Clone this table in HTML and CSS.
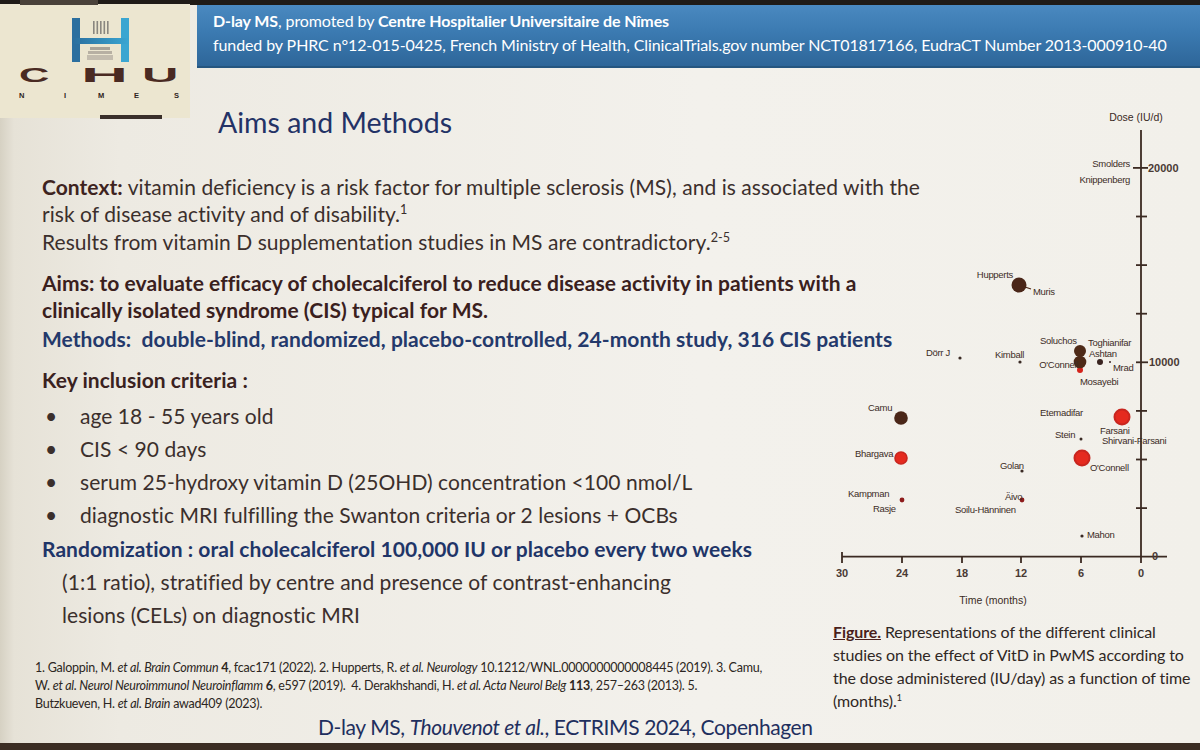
FILE: index.html
```html
<!DOCTYPE html>
<html lang="en">
<head>
<meta charset="utf-8">
<title>Aims and Methods</title>
<link rel="stylesheet" href="styles.css">
</head>
<body>
<div class="slide">
  <header class="header">
    <div class="logo">
      <svg class="logo-card" viewBox="0 0 192 124" width="192" height="124">
        <defs>
          <linearGradient id="hgrad" x1="0" y1="0" x2="1" y2="0">
            <stop offset="0" stop-color="#2a6e9e"/>
            <stop offset="1" stop-color="#3aa6d2"/>
          </linearGradient>
        </defs>
        <rect x="0" y="4" width="190" height="114" fill="#ece6d0"/>
        <rect x="20" y="0" width="78" height="5" fill="#4a423a"/>
        <rect x="100" y="115" width="62" height="4" fill="#3a302a"/>
        <!-- pillars -->
        <g fill="#8a8780">
          <rect x="93" y="21" width="1.6" height="13"/>
          <rect x="96.5" y="21" width="1.6" height="13"/>
          <rect x="100" y="21" width="1.6" height="13"/>
          <rect x="103.5" y="21" width="1.6" height="13"/>
          <rect x="107" y="21" width="1.6" height="13"/>
        </g>
        <!-- base steps -->
        <rect x="90" y="47" width="20" height="3" fill="#a9a398"/>
        <rect x="88" y="51" width="24" height="3" fill="#b7b0a3"/>
        <rect x="87" y="55" width="26" height="5" fill="#c3bcae"/>
        <!-- H -->
        <rect x="72" y="18" width="8" height="44" fill="#2b6f9f"/>
        <rect x="121" y="18" width="8" height="44" fill="#3ba6d1"/>
        <rect x="72" y="38" width="57" height="6" fill="url(#hgrad)"/>
        <!-- CHU -->
        <text class="logo-big" transform="translate(19 82) scale(2 1)">C</text>
        <text class="logo-big" transform="translate(81 82) scale(3.1 1)">H</text>
        <text class="logo-big" transform="translate(142 82) scale(2.4 1)">U</text>
        <text class="logo-small" x="19" y="98">N</text>
        <text class="logo-small" x="64" y="98">I</text>
        <text class="logo-small" x="98" y="98">M</text>
        <text class="logo-small" x="134" y="98">E</text>
        <text class="logo-small" x="174" y="98">S</text>
      </svg>
    </div>
    <div class="banner">
      <p><b>D-lay MS</b>, promoted by <b>Centre Hospitalier Universitaire de Nîmes</b></p>
      <p>funded by PHRC n°12-015-0425, French Ministry of Health, ClinicalTrials.gov number NCT01817166, EudraCT Number 2013-000910-40</p>
    </div>
  </header>

  <main class="content">
    <section class="left">
      <h1 class="title">Aims and Methods</h1>
      <div class="text">
        <p class="context"><b class="brown">Context:</b> vitamin deficiency is a risk factor for multiple sclerosis (MS), and is associated with the<br>risk of disease activity and of disability.<sup>1</sup></p>
        <p class="results">Results from vitamin D supplementation studies in MS are contradictory.<sup>2-5</sup></p>
        <p class="aims">Aims: to evaluate efficacy of cholecalciferol to reduce disease activity in patients with a<br>clinically isolated syndrome (CIS) typical for MS.</p>
        <p class="methods">Methods:&nbsp; double-blind, randomized, placebo-controlled, 24-month study, 316 CIS patients</p>
        <p class="key">Key inclusion criteria :</p>
        <ul class="bullets">
          <li><span class="dot">•</span>age 18 - 55 years old</li>
          <li><span class="dot">•</span>CIS &lt; 90 days</li>
          <li><span class="dot">•</span>serum 25-hydroxy vitamin D (25OHD) concentration &lt;100 nmol/L</li>
          <li><span class="dot">•</span>diagnostic MRI fulfilling the Swanton criteria or 2 lesions + OCBs</li>
        </ul>
        <p class="random"><b class="navy">Randomization : oral cholecalciferol 100,000 IU or placebo every two weeks</b><br>(1:1 ratio), stratified by centre and presence of contrast-enhancing<br>lesions (CELs) on diagnostic MRI</p>
      </div>
      <div class="refs">
        <p>1. Galoppin, M. <i>et al. Brain Commun</i> <b>4</b>, fcac171 (2022). 2. Hupperts, R. <i>et al. Neurology</i> 10.1212/WNL.0000000000008445 (2019). 3. Camu,</p>
        <p>W. <i>et al. Neurol Neuroimmunol Neuroinflamm</i> <b>6</b>, e597 (2019).&nbsp; 4. Derakhshandi, H. <i>et al. Acta Neurol Belg</i> <b>113</b>, 257–263 (2013). 5.</p>
        <p>Butzkueven, H. <i>et al. Brain</i> awad409 (2023).</p>
      </div>
      <p class="footer">D-lay MS, <i>Thouvenot et al.</i>, ECTRIMS 2024, Copenhagen</p>
    </section>

    <aside class="right">
      <svg class="chart" viewBox="0 0 380 510" width="380" height="510">
        <!-- axes -->
        <g class="axis">
          <line x1="321" y1="30" x2="321" y2="457"/>
          <line x1="22" y1="456.7" x2="347" y2="456.7"/>
          <line x1="316" y1="408.1" x2="327" y2="408.1"/>
          <line x1="316" y1="359.5" x2="327" y2="359.5"/>
          <line x1="316" y1="310.9" x2="327" y2="310.9"/>
          <line x1="316" y1="262.3" x2="328" y2="262.3"/>
          <line x1="316" y1="213.7" x2="327" y2="213.7"/>
          <line x1="316" y1="165.1" x2="327" y2="165.1"/>
          <line x1="316" y1="116.5" x2="327" y2="116.5"/>
          <line x1="313" y1="67.9" x2="328" y2="67.9"/>
          <line x1="22" y1="452" x2="22" y2="463"/>
          <line x1="82" y1="456.7" x2="82" y2="463"/>
          <line x1="142" y1="456.7" x2="142" y2="463"/>
          <line x1="201" y1="456.7" x2="201" y2="463"/>
          <line x1="261" y1="456.7" x2="261" y2="463"/>
          <line x1="321" y1="456.7" x2="321" y2="463"/>
        </g>
        <text class="ax" x="316" y="21" text-anchor="middle">Dose (IU/d)</text>
        <text class="ax" x="173" y="504" text-anchor="middle">Time (months)</text>
        <g class="tick">
          <text x="22" y="477" text-anchor="middle">30</text>
          <text x="82" y="477" text-anchor="middle">24</text>
          <text x="142" y="477" text-anchor="middle">18</text>
          <text x="201" y="477" text-anchor="middle">12</text>
          <text x="261" y="477" text-anchor="middle">6</text>
          <text x="321" y="477" text-anchor="middle">0</text>
          <text x="328" y="72">20000</text>
          <text x="329" y="266">10000</text>
          <text x="332" y="460">0</text>
        </g>
        <!-- dots -->
        <g>
          <circle cx="199" cy="185" r="7.5" fill="#4a2618"/>
          <line x1="205" y1="187" x2="211" y2="189" stroke="#4a2618" stroke-width="1.2"/>
          <circle cx="140" cy="258" r="1.6" fill="#3a2a24"/>
          <circle cx="200" cy="262" r="1.6" fill="#3a2a24"/>
          <circle cx="260" cy="270" r="3" fill="#d4231b"/>
          <circle cx="260" cy="251" r="6" fill="#4e2a17"/>
          <circle cx="260" cy="262" r="6.3" fill="#4e2a17"/>
          <circle cx="280" cy="262" r="3" fill="#3a2420"/>
          <circle cx="290" cy="262" r="1" fill="#3a2420"/>
          <circle cx="302" cy="317" r="7.5" fill="#e52a1f" stroke="#c8261f" stroke-width="2"/>
          <circle cx="261" cy="339" r="1.5" fill="#3a2a24"/>
          <circle cx="81" cy="318" r="6.8" fill="#4a2618"/>
          <circle cx="81" cy="358" r="6" fill="#e52a1f" stroke="#c8261f" stroke-width="1.6"/>
          <circle cx="262" cy="358" r="7.5" fill="#e52a1f" stroke="#c8261f" stroke-width="2"/>
          <circle cx="202" cy="371" r="1.6" fill="#3a2a24"/>
          <circle cx="82" cy="400" r="2.4" fill="#8e1c1c"/>
          <circle cx="202" cy="400" r="2.4" fill="#8e1c1c"/>
          <circle cx="262" cy="436" r="1.6" fill="#3a2a24"/>
        </g>
        <!-- labels -->
        <g class="lbl">
          <text x="310" y="67" text-anchor="end">Smolders</text>
          <text x="310" y="83" text-anchor="end">Knippenberg</text>
          <text x="193" y="178" text-anchor="end">Hupperts</text>
          <text x="213" y="195">Muris</text>
          <text x="130" y="256" text-anchor="end">Dörr J</text>
          <text x="175" y="258">Kimball</text>
          <text x="220" y="244">Soluchos</text>
          <text x="268" y="246">Toghianifar</text>
          <text x="269" y="257">Ashtan</text>
          <text x="258" y="268" text-anchor="end">O'Connell</text>
          <text x="293" y="271">Mrad</text>
          <text x="260" y="285">Mosayebi</text>
          <text x="220" y="316">Etemadifar</text>
          <text x="280" y="334">Farsani</text>
          <text x="282" y="344">Shirvani-Farsani</text>
          <text x="235" y="338">Stein</text>
          <text x="48" y="311">Camu</text>
          <text x="35" y="357">Bhargava</text>
          <text x="270" y="371">O'Connell</text>
          <text x="180" y="369">Golan</text>
          <text x="28" y="397">Kampman</text>
          <text x="53" y="412">Rasje</text>
          <text x="185" y="400">Äivo</text>
          <text x="135" y="413">Soilu-Hänninen</text>
          <text x="267" y="438">Mahon</text>
        </g>
      </svg>
      <p class="caption"><b class="fig">Figure.</b> Representations of the different clinical<br>studies on the effect of VitD in PwMS according to<br>the dose administered (IU/day) as a function of time<br>(months).<sup>1</sup></p>
    </aside>
  </main>
</div>
</body>
</html>
```

FILE: styles.css
```css
* {
  box-sizing: border-box;
  margin: 0;
  padding: 0;
}

html,
body {
  width: 1200px;
  height: 750px;
  overflow: hidden;
}

body {
  background: #efede6;
  font-family: Lato, "Liberation Sans", sans-serif;
  color: #3b2f2c;
}

.slide {
  width: 1200px;
  height: 750px;
  display: flex;
  flex-direction: column;
  background: linear-gradient(90deg, #d6d1c3 0, #e6e2d7 14px, #edeae2 120px, #f3f1ec 700px, #f2f0ea 1200px);
  border-bottom: 7px solid #3b2d23;
}

/* header */
.header {
  display: flex;
  height: 68px;
  flex-shrink: 0;
  background: linear-gradient(#1f1b17 0, #1f1b17 5px, transparent 5px);
}

.logo {
  width: 197px;
  height: 68px;
  flex-shrink: 0;
}

.logo-card {
  display: block;
}

.logo-big {
  font-family: "Liberation Sans", sans-serif;
  font-weight: 700;
  font-size: 21px;
  fill: #4a2a22;
}

.logo-small {
  font-family: "Liberation Sans", sans-serif;
  font-weight: 700;
  font-size: 7.5px;
  fill: #2e2420;
}

.banner {
  flex: 1;
  margin-top: 5px;
  height: 63px;
  padding: 4px 0 0 16px;
  background: linear-gradient(180deg, #4a89c0 0%, #3b7ab1 45%, #2e6699 100%);
  border-bottom: 2px solid #255680;
  color: #ffffff;
  font-size: 16px;
  line-height: 24px;
  letter-spacing: -0.1px;
  white-space: nowrap;
}

/* content */
.content {
  display: grid;
  grid-template-columns: 820px 380px;
  flex: 1;
}

.left {
  padding-left: 42px;
}

.title {
  margin: 38px 0 0 176px;
  font-size: 28.5px;
  line-height: 33px;
  font-weight: 400;
  color: #233266;
}

.text {
  margin-top: 34px;
}

.text p,
.bullets li {
  font-size: 21px;
  line-height: 27px;
  white-space: nowrap;
  letter-spacing: 0.05px;
  color: #3b2f2c;
}

sup {
  font-size: 0.6em;
  line-height: 0;
  vertical-align: 0.6em;
}

.brown {
  color: #3e2320;
}

.navy {
  color: #1f3568;
}

.text .results {
  margin-top: 1px;
}

.text .aims {
  margin-top: 14px;
  font-weight: 700;
  color: #3a201d;
}

.text .methods {
  margin-top: 2px;
  font-weight: 700;
  color: #24396b;
}

.text .key {
  margin-top: 14px;
  font-weight: 700;
  color: #3a221f;
}

.bullets {
  list-style: none;
  margin-top: 6px;
}

.bullets li {
  display: flex;
  line-height: 33px;
}

.dot {
  width: 38px;
  padding-left: 3px;
  flex-shrink: 0;
}

.text .random {
  margin-top: 1px;
  line-height: 33px;
  padding-left: 20px;
  text-indent: -20px;
}

.refs {
  margin: 28px 0 0 -7px;
}

.refs p {
  font-size: 12.5px;
  line-height: 18px;
  white-space: nowrap;
  letter-spacing: -0.25px;
  color: #2c2622;
}

.footer {
  margin-top: 1px;
  padding-left: 276px;
  font-size: 21px;
  line-height: 26px;
  color: #1f2f5e;
  white-space: nowrap;
  letter-spacing: -0.4px;
}

/* right column */
.chart {
  display: block;
  margin-top: 32px;
}

.axis line {
  stroke: #3b2a22;
  stroke-width: 1.8;
}

.ax {
  font-family: "Liberation Sans", sans-serif;
  font-size: 10.5px;
  fill: #3a2a24;
}

.tick text {
  font-family: "Liberation Sans", sans-serif;
  font-size: 11px;
  font-weight: 700;
  fill: #4a3a34;
}

.lbl text {
  font-family: "Liberation Sans", sans-serif;
  font-size: 9.5px;
  letter-spacing: -0.3px;
  fill: #3d2c26;
}

.caption {
  margin-top: 10px;
  padding-left: 13px;
  font-size: 16px;
  line-height: 23px;
  letter-spacing: -0.1px;
  color: #2f2724;
  white-space: nowrap;
}

.fig {
  color: #4a1f1c;
  text-decoration: underline;
}
```
